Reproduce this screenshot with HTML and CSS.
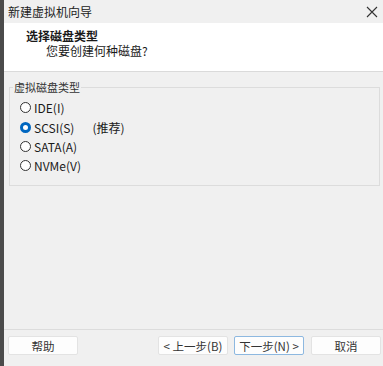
FILE: index.html
```html
<!DOCTYPE html>
<html>
  <head>
    <meta charset="utf-8">
    <link rel="stylesheet" href="styles.css">
  </head>
  <body>
    <div class="edge"></div>
    <div class="window">
      <div class="titlebar">
        <span class="title">新建虚拟机向导</span>
        <svg class="close" width="12" height="12" viewBox="0 0 12 12"><path d="M1 1L11 11M11 1L1 11" stroke="#333" stroke-width="1.1" fill="none"/></svg>
      </div>
      <div class="header">
        <div class="head-title">选择磁盘类型</div>
        <div class="head-sub">您要创建何种磁盘?</div>
      </div>
      <div class="content">
        <fieldset class="group">
          <legend>虚拟磁盘类型</legend>
          <div class="opt"><span class="radio"></span>IDE(I)</div>
          <div class="opt"><span class="radio on"></span>SCSI(S)<span class="hint">(推荐)</span></div>
          <div class="opt"><span class="radio"></span>SATA(A)</div>
          <div class="opt"><span class="radio"></span>NVMe(V)</div>
        </fieldset>
      </div>
      <div class="footer">
        <button class="btn">帮助</button>
        <div class="spacer"></div>
        <button class="btn">&lt; 上一步(B)</button>
        <button class="btn primary">下一步(N) &gt;</button>
        <button class="btn">取消</button>
      </div>
    </div>
  </body>
</html>
```

FILE: styles.css
```css
body {margin: 0; display: flex; height: 366px; overflow: hidden; background: #f0f0f0; font-family: "Noto Sans CJK SC", "Noto Sans", sans-serif; color: #1a1a1a}
.edge {width: 4px; background: #4b4b4b; flex: none}
.window {flex: 1; display: flex; flex-direction: column}

.titlebar {height: 23px; display: flex; align-items: center; justify-content: space-between; padding: 0 3px 0 4px; background: #f0f0f0}
.title {font-size: 12px; color: #222}
.close {margin-right: 2px}

.header {height: 49px; background: #fff; border-bottom: 1px solid #dadada; padding: 5px 0 0 22px; box-sizing: border-box}
.head-title {font-size: 12px; font-weight: bold; line-height: 16px}
.head-sub {font-size: 12px; line-height: 16px; padding-left: 20px; margin-top: -1px}

.content {flex: 1; padding: 7px 0 0 5px}
.group {margin: 0; border: 1px solid #dcdcdc; padding: 3px 0 9px 10px; width: 371px; box-sizing: border-box}
.group legend {font-size: 11px; color: #333; padding: 0 1px; margin-left: -7px}
.opt {display: flex; align-items: center; height: 19.4px; font-size: 12px}
.radio {width: 9px; height: 9px; border: 1px solid #333; border-radius: 50%; background: #fff; margin-right: 3px; box-sizing: content-box}
.radio.on {width: 5px; height: 5px; border: 3px solid #0067c0}
.hint {margin-left: 18px}

.footer {height: 30px; border-top: 1px solid #dcdcdc; display: flex; align-items: flex-start; padding: 6px 2px 0 4px; gap: 6px}
.spacer {flex: 1}
.btn {width: 70px; height: 19px; padding: 0; background: #fdfdfd; border: 1px solid #e3e3e3; border-radius: 2px; font-family: inherit; font-size: 11.5px; color: #333}
.btn.primary {border-color: #8db8e0; margin-right: 1px}
```
